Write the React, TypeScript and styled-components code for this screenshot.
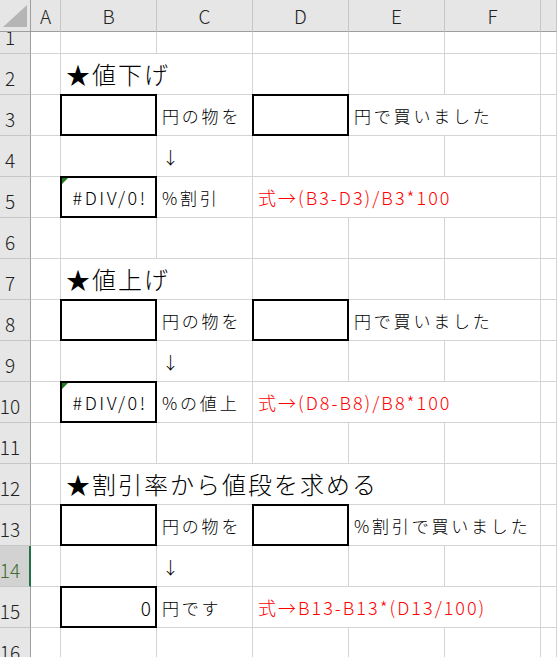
import styled, { createGlobalStyle } from "styled-components";

const GlobalStyle = createGlobalStyle`
  html, body {
    margin: 0;
    padding: 0;
    background: #ffffff;
    overflow: hidden;
  }
  body {
    font-family: "Noto Sans CJK JP", "Noto Sans", sans-serif;
  }
`;

type Kind = "title" | "text" | "formula" | "error" | "number" | "arrow";

interface CellDef {
  col: number;
  span?: number;
  text?: string;
  kind?: Kind;
  box?: boolean;
}

const COLUMNS = ["A", "B", "C", "D", "E", "F", ""];
const SELECTED_ROW = 14;

const priceRow = (tail: string): CellDef[] => [
  { col: 1, box: true },
  { col: 2, text: "円の物を", kind: "text" },
  { col: 3, box: true },
  { col: 4, span: 2, text: tail, kind: "text" },
];

const arrowRow: CellDef[] = [{ col: 2, text: "↓", kind: "arrow" }];

const ROWS: { num: number; cells: CellDef[] }[] = [
  { num: 1, cells: [] },
  { num: 2, cells: [{ col: 1, span: 2, text: "★値下げ", kind: "title" }] },
  { num: 3, cells: priceRow("円で買いました") },
  { num: 4, cells: arrowRow },
  {
    num: 5,
    cells: [
      { col: 1, box: true, text: "#DIV/0!", kind: "error" },
      { col: 2, text: "%割引", kind: "text" },
      { col: 3, span: 3, text: "式→(B3-D3)/B3*100", kind: "formula" },
    ],
  },
  { num: 6, cells: [] },
  { num: 7, cells: [{ col: 1, span: 2, text: "★値上げ", kind: "title" }] },
  { num: 8, cells: priceRow("円で買いました") },
  { num: 9, cells: arrowRow },
  {
    num: 10,
    cells: [
      { col: 1, box: true, text: "#DIV/0!", kind: "error" },
      { col: 2, text: "%の値上", kind: "text" },
      { col: 3, span: 3, text: "式→(D8-B8)/B8*100", kind: "formula" },
    ],
  },
  { num: 11, cells: [] },
  {
    num: 12,
    cells: [{ col: 1, span: 4, text: "★割引率から値段を求める", kind: "title" }],
  },
  { num: 13, cells: priceRow("%割引で買いました") },
  { num: 14, cells: arrowRow },
  {
    num: 15,
    cells: [
      { col: 1, box: true, text: "0", kind: "number" },
      { col: 2, text: "円です", kind: "text" },
      { col: 3, span: 3, text: "式→B13-B13*(D13/100)", kind: "formula" },
    ],
  },
  { num: 16, cells: [] },
];

const Sheet = styled.div`
  display: grid;
  grid-template-columns: 31px 30px repeat(5, 96px) 1fr;
  grid-template-rows: 32px 22px repeat(15, 41px);
  width: 557px;
  height: 657px;
  overflow: hidden;
  color: #000;
`;

const Corner = styled.div`
  background: #e6e6e6;
  border-right: 1px solid #9e9e9e;
  border-bottom: 1px solid #9e9e9e;
  display: flex;
  align-items: flex-end;
  justify-content: flex-end;
  padding: 0 3px 4px 0;
`;

const ColHeader = styled.div`
  background: #e6e6e6;
  border-right: 1px solid #c6c6c6;
  border-bottom: 1px solid #9e9e9e;
  display: flex;
  align-items: center;
  justify-content: center;
  font-size: 19px;
  font-weight: 300;
  color: #222;
  line-height: 1;
`;

const RowHeader = styled.div<{ $selected: boolean }>`
  background: ${(p) => (p.$selected ? "#d2d2d2" : "#e6e6e6")};
  border-right: ${(p) => (p.$selected ? "2px solid #217346" : "1px solid #9e9e9e")};
  border-bottom: 1px solid #c6c6c6;
  color: ${(p) => (p.$selected ? "#3f6b2e" : "#222")};
  display: flex;
  align-items: flex-end;
  overflow: hidden;
  font-size: 19px;
  font-weight: 300;
`;

const RowLabel = styled.span`
  flex: none;
  width: 20px;
  height: 40px;
  display: flex;
  align-items: center;
  justify-content: center;
  padding-top: 6px;
  box-sizing: border-box;
  line-height: 1;
`;

const KIND_STYLE: Record<Kind, string> = {
  title: "font-size: 24px; letter-spacing: 2px; color: #000;",
  text: "font-size: 17px; letter-spacing: 2.8px; color: #000;",
  arrow: "font-size: 17px; color: #000;",
  formula: "font-size: 18px; letter-spacing: 2px; color: #ff0000;",
  error: "font-size: 18px; letter-spacing: 2.5px; color: #000; justify-content: center;",
  number: "font-size: 19px; color: #000; justify-content: flex-end;",
};

const Cell = styled.div<{ $span: number; $kind?: Kind; $box: boolean }>`
  grid-column: span ${(p) => p.$span};
  position: relative;
  box-sizing: border-box;
  border-right: 1px solid #d4d4d4;
  border-bottom: 1px solid #d4d4d4;
  display: flex;
  align-items: center;
  padding: 0 5px;
  white-space: nowrap;
  line-height: 1;
  min-width: 0;
  font-weight: 300;
  ${(p) => (p.$kind ? KIND_STYLE[p.$kind] : "")}

  ${(p) =>
    p.$box &&
    `
    &::after {
      content: "";
      position: absolute;
      left: -1px;
      top: -1px;
      right: -1px;
      bottom: -1px;
      border: 2px solid #000;
      pointer-events: none;
    }
  `}

  ${(p) =>
    p.$kind === "error" &&
    `
    padding: 0 2px 0 5px;
    &::before {
      content: "";
      position: absolute;
      left: 1px;
      top: 1px;
      width: 0;
      height: 0;
      border-top: 6px solid #1e7d1e;
      border-right: 6px solid transparent;
      z-index: 1;
    }
  `}
`;

function CornerTriangle() {
  return (
    <svg width="24" height="22" viewBox="0 0 24 22">
      <polygon points="24,0 24,22 0,22" fill="#b5b5b5" />
    </svg>
  );
}

function renderRow(num: number, cells: CellDef[]) {
  const out = [];
  let c = 0;
  while (c < COLUMNS.length) {
    const def = cells.find((d) => d.col === c);
    const span = def?.span ?? 1;
    out.push(
      <Cell key={`${num}-${c}`} $span={span} $kind={def?.kind} $box={!!def?.box}>
        {def?.text}
      </Cell>
    );
    c += span;
  }
  return out;
}

export default function App() {
  return (
    <>
      <GlobalStyle />
      <Sheet>
        <Corner>
          <CornerTriangle />
        </Corner>
        {COLUMNS.map((name, i) => (
          <ColHeader key={`h${i}`}>{name}</ColHeader>
        ))}
        {ROWS.map((row) => [
          <RowHeader key={`r${row.num}`} $selected={row.num === SELECTED_ROW}>
            <RowLabel>{row.num}</RowLabel>
          </RowHeader>,
          ...renderRow(row.num, row.cells),
        ])}
      </Sheet>
    </>
  );
}
